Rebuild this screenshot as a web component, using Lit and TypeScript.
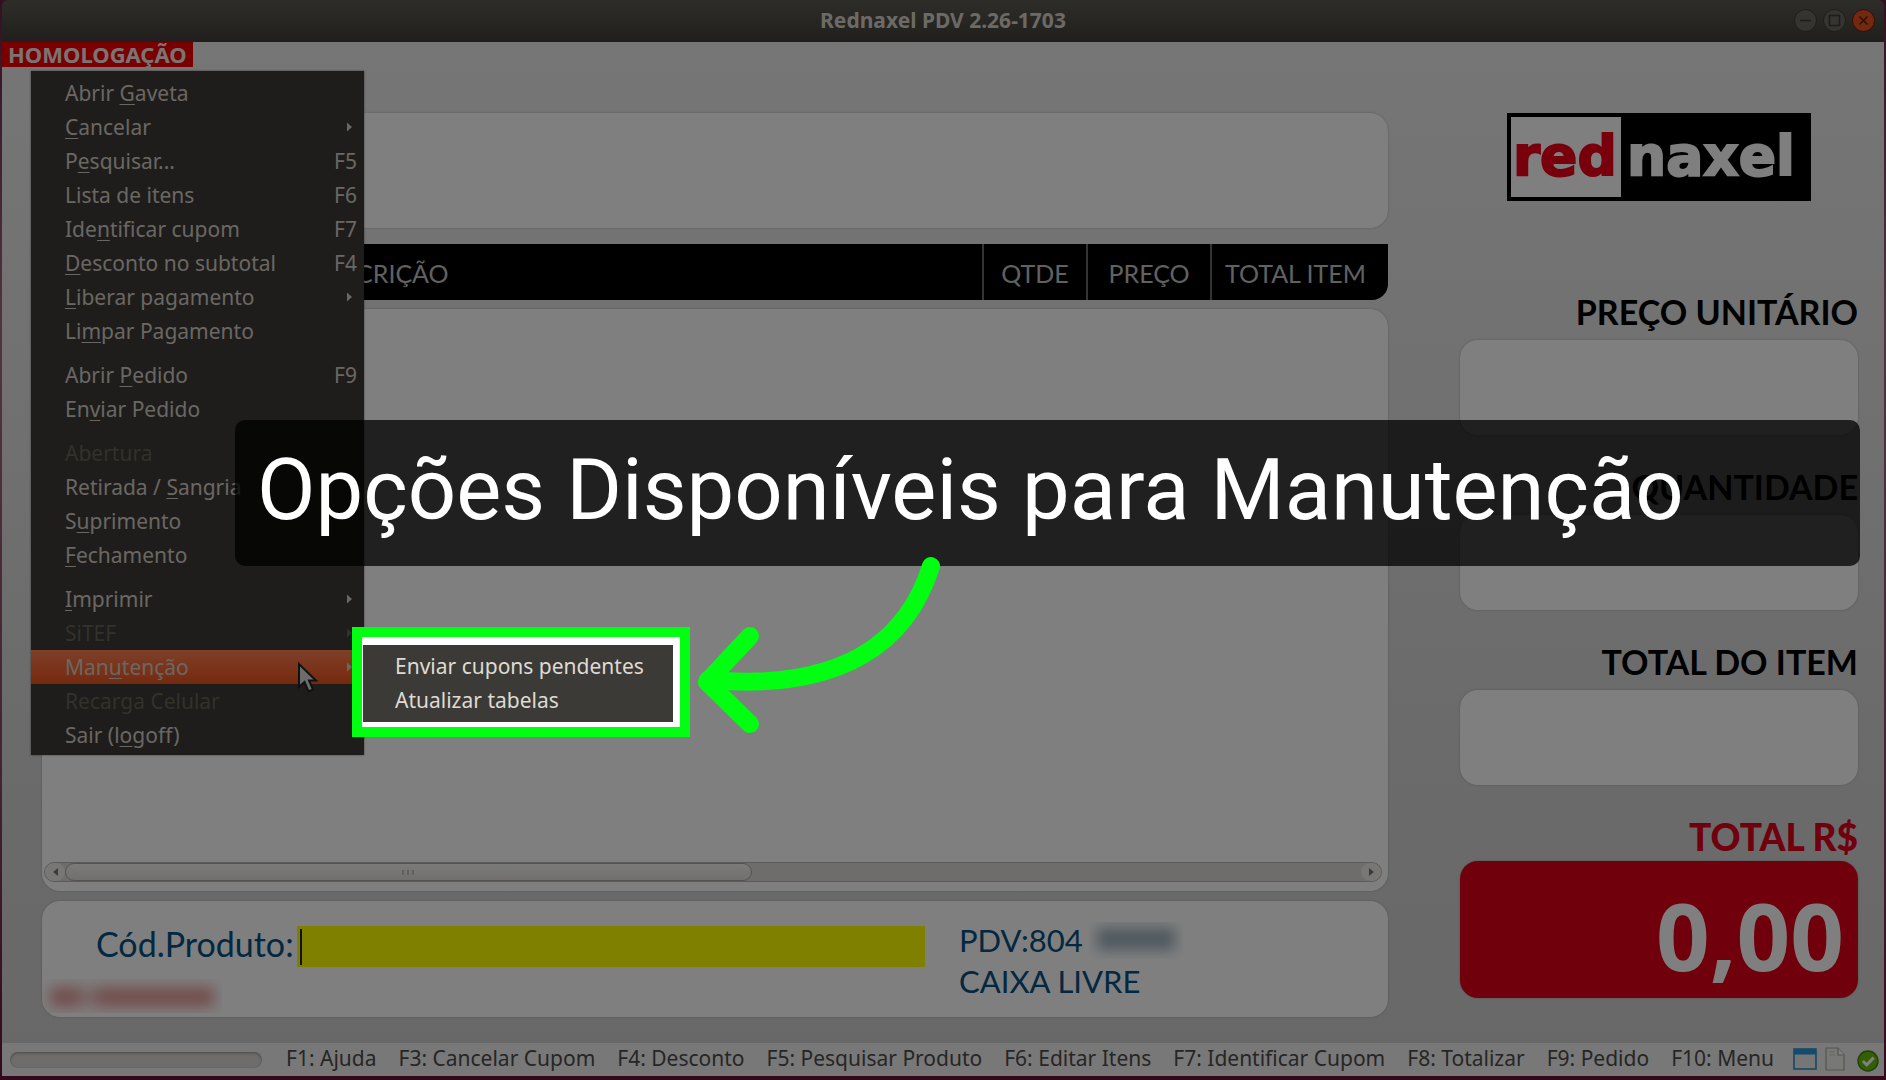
import { LitElement, html, css, svg, nothing } from "lit";
import { customElement } from "lit/decorators.js";
import { classMap } from "lit/directives/class-map.js";

interface MenuEntry {
  text: string;
  key?: string;
  shortcut?: string;
  sub?: boolean;
  disabled?: boolean;
  active?: boolean;
}

const MENU: MenuEntry[][] = [
  [
    { text: "Abrir Gaveta", key: "G" },
    { text: "Cancelar", key: "C", sub: true },
    { text: "Pesquisar...", key: "e", shortcut: "F5" },
    { text: "Lista de itens", shortcut: "F6" },
    { text: "Identificar cupom", key: "n", shortcut: "F7" },
    { text: "Desconto no subtotal", key: "D", shortcut: "F4" },
    { text: "Liberar pagamento", key: "L", sub: true },
    { text: "Limpar Pagamento", key: "m" },
  ],
  [
    { text: "Abrir Pedido", key: "P", shortcut: "F9" },
    { text: "Enviar Pedido", key: "v" },
  ],
  [
    { text: "Abertura", disabled: true },
    { text: "Retirada / Sangria", key: "S" },
    { text: "Suprimento", key: "u" },
    { text: "Fechamento", key: "F" },
  ],
  [
    { text: "Imprimir", key: "I", sub: true },
    { text: "SiTEF", sub: true, disabled: true },
    { text: "Manutenção", key: "u", sub: true, active: true },
    { text: "Recarga Celular", disabled: true },
    { text: "Sair (logoff)", key: "o" },
  ],
];

const SUBMENU = ["Enviar cupons pendentes", "Atualizar tabelas"];

const FIELDS = [
  { id: "unit", label: "PREÇO UNITÁRIO" },
  { id: "qty", label: "QUANTIDADE" },
  { id: "item", label: "TOTAL DO ITEM" },
];

const HINTS = [
  "F1: Ajuda",
  "F3: Cancelar Cupom",
  "F4: Desconto",
  "F5: Pesquisar Produto",
  "F6: Editar Itens",
  "F7: Identificar Cupom",
  "F8: Totalizar",
  "F9: Pedido",
  "F10: Menu",
];

@customElement("pdv-menu")
class PdvMenu extends LitElement {
  static styles = css`
    :host {
      display: block;
      box-sizing: border-box;
      width: 333px;
      padding: 5px 0 3px;
      background: #3c3a37;
      box-shadow: 0 0 2px rgba(0, 0, 0, 0.5);
      font-family: "Noto Sans", "Open Sans", sans-serif;
      font-size: 21px;
    }
    .item {
      display: flex;
      align-items: center;
      width: 100%;
      height: 34px;
      padding: 0 7px 0 34px;
      border: 0;
      background: none;
      color: #d4cfc6;
      font: inherit;
      text-align: left;
    }
    .label {
      flex: 1;
      white-space: pre;
    }
    .label u {
      text-decoration-thickness: 1px;
      text-underline-offset: 3px;
    }
    .disabled {
      color: #656255;
    }
    .active {
      background: linear-gradient(#fa8050, #f2602c 70%, #e4561f);
    }
    .arrow {
      width: 5px;
      height: 10px;
      margin-right: 5px;
      fill: currentColor;
    }
    .sep {
      height: 10px;
    }
  `;

  private label(e: MenuEntry) {
    if (!e.key) return e.text;
    const i = e.text.indexOf(e.key);
    return html`${e.text.slice(0, i)}<u>${e.key}</u>${e.text.slice(i + 1)}`;
  }

  render() {
    return html`${MENU.map(
      (group, g) => html`${g ? html`<div class="sep" role="separator"></div>` : nothing}
        ${group.map(
          (e) => html`<button
            class=${classMap({ item: true, disabled: !!e.disabled, active: !!e.active })}
            role="menuitem"
            ?disabled=${e.disabled}
          ><span class="label">${this.label(e)}</span>${e.shortcut
              ? html`<span>${e.shortcut}</span>`
              : nothing}${e.sub
              ? html`<svg class="arrow" viewBox="0 0 5 10"><path d="M0 0.5L5 5L0 9.5Z" /></svg>`
              : nothing}</button>`
        )}`
    )}`;
  }
}

@customElement("pdv-sidebar")
class PdvSidebar extends LitElement {
  static styles = css`
    :host {
      display: flex;
      flex-direction: column;
      font-family: Lato, "Open Sans", sans-serif;
    }
    .logo {
      display: flex;
      align-self: center;
      box-sizing: border-box;
      width: 304px;
      height: 88px;
      margin: 0 0 85px;
      padding: 4px;
      background: #000;
    }
    .field {
      display: flex;
      flex-direction: column;
      margin-bottom: 26px;
    }
    .caption {
      height: 54px;
      line-height: 52px;
      text-align: right;
      font-size: 34px;
      font-weight: 700;
      color: #000;
      white-space: nowrap;
    }
    .box {
      box-sizing: border-box;
      width: 100%;
      height: 95px;
      padding: 0 14px;
      border: 0;
      border-radius: 18px;
      background: #fff;
      box-shadow: 0 0 2px rgba(90, 110, 110, 0.5);
      font: 600 56px Lato, sans-serif;
      text-align: right;
    }
    .total .caption {
      height: 50px;
      color: #e0001c;
      font-size: 37px;
      font-weight: 900;
    }
    .total {
      margin: 0;
    }
    .total .box {
      display: block;
      height: 137px;
      background: #e00018;
      color: #fff;
      font: 700 94px/148px "Open Sans", sans-serif;
    }
  `;

  render() {
    return html`
      <svg class="logo" viewBox="0 0 296 80" role="img" aria-label="rednaxel">
        <rect width="110" height="80" fill="#fff" />
        <g font-family="DejaVu Sans, sans-serif" font-weight="700" font-size="55" stroke-width="2">
          <text x="2" y="58" fill="#f00018" stroke="#f00018">red</text>
          <text x="116" y="58" fill="#fff" stroke="#fff">naxel</text>
        </g>
      </svg>
      ${FIELDS.map(
        (f) => html`<div class="field">
          <label class="caption" for=${f.id}>${f.label}</label>
          <input class="box" id=${f.id} readonly />
        </div>`
      )}
      <div class="field total">
        <label class="caption" for="total">TOTAL R$</label>
        <output class="box" id="total">0,00</output>
      </div>
    `;
  }
}

@customElement("pdv-status")
class PdvStatus extends LitElement {
  static styles = css`
    :host {
      display: flex;
      align-items: center;
      height: 33px;
      padding: 0 5px 0 8px;
      background: #f2f1f0;
      color: #4c4c4c;
      font-family: "Noto Sans", "Open Sans", sans-serif;
      font-size: 21px;
      line-height: 31px;
    }
    .progress {
      width: 252px;
      height: 16px;
      border-radius: 8px;
      background: #dcdad6;
      box-shadow: inset 0 1px 3px rgba(0, 0, 0, 0.35);
    }
    .hints {
      flex: 1;
      display: flex;
      justify-content: space-between;
      padding-bottom: 2px;
      margin: 0 19px 0 24px;
      white-space: nowrap;
    }
    .icons {
      display: flex;
      align-items: center;
      gap: 8px;
    }
    .icons svg:last-child {
      margin-left: 4px;
    }
  `;

  render() {
    return html`
      <div class="progress"></div>
      <div class="hints">${HINTS.map((h) => html`<span>${h}</span>`)}</div>
      <div class="icons">
        <svg width="24" height="24" viewBox="0 0 24 24">
          <rect x="1" y="1" width="22" height="20" fill="#ececec" stroke="#2f8fc4" stroke-width="1.6" />
          <rect x="1" y="1" width="22" height="5.5" fill="#2596d6" />
        </svg>
        <svg width="20" height="26" viewBox="0 0 20 26">
          <path d="M1 1H13L19 8V23H1Z" fill="#f0f0ee" stroke="#a9a9a6" stroke-width="1.2" />
          <path d="M13 1V8H19" fill="#fff" stroke="#a9a9a6" stroke-width="1.2" />
          <path d="M4 5H10M4 8H10" stroke="#d2d2d0" />
        </svg>
        <svg width="22" height="26" viewBox="0 0 22 26">
          <circle cx="11" cy="14" r="10" fill="#68bd08" stroke="#3f8404" stroke-width="1.4" />
          <path d="M5.8 14L9.8 17.8L16.6 10.6" fill="none" stroke="#fff" stroke-width="3" />
        </svg>
      </div>
    `;
  }
}

@customElement("app-root")
class AppRoot extends LitElement {
  static styles = css`
    :host {
      display: block;
      position: relative;
      overflow: hidden;
      font-family: "Noto Sans", "Open Sans", sans-serif;
    }
    .desktop {
      display: flex;
      box-sizing: border-box;
      min-height: 100vh;
      padding: 0 2px 4px;
      background: linear-gradient(#6a2048, #a06a80 30%, #8a4a68 70%, #6a1238);
    }
    .window {
      flex: 1;
      display: flex;
      flex-direction: column;
      min-width: 0;
    }
    .titlebar {
      display: grid;
      grid-template-columns: 1fr auto 1fr;
      align-items: center;
      box-sizing: border-box;
      height: 42px;
      padding: 0 9px 2px;
      background: linear-gradient(#5c5b52, #403e3a);
      border-radius: 6px 6px 0 0;
      color: #d9d5cb;
    }
    .titlebar h1 {
      grid-column: 2;
      margin: 0;
      font-size: 21px;
      font-weight: 700;
    }
    .controls {
      display: flex;
      justify-content: flex-end;
      gap: 6px;
    }
    .control {
      width: 23px;
      height: 23px;
      padding: 0;
      border: 0;
      background: none;
    }
    .control svg {
      display: block;
    }
    .stage {
      flex: 1;
      display: flex;
      flex-direction: column;
      background: linear-gradient(#ececec, #e2e2e2 35%, #d6d6d6 70%, #d1d1d1);
    }
    .env {
      align-self: flex-start;
      box-sizing: border-box;
      height: 25px;
      padding: 0 6px;
      background: #f50000;
      color: #f4e8e8;
      font-size: 22px;
      font-weight: 700;
      line-height: 25px;
    }
    .main {
      flex: 1;
      display: grid;
      grid-template-columns: minmax(0, 1fr) 398px;
      gap: 72px;
      padding: 46px 26px 26px 40px;
    }
    .left {
      display: flex;
      flex-direction: column;
    }
    .card {
      border-radius: 18px;
      background: #fff;
      box-shadow: 0 0 2px rgba(90, 110, 110, 0.5);
    }
    .display {
      height: 115px;
    }
    .columns {
      width: 100%;
      height: 56px;
      margin: 16px 0 9px;
      border-spacing: 0;
      table-layout: fixed;
      border-radius: 0 0 16px 0;
      background: #000;
      color: #c2c2c2;
      font-family: Lato, "Open Sans", sans-serif;
      font-size: 25px;
    }
    .columns th {
      padding: 2px 0 0;
      font-weight: 400;
      text-align: center;
    }
    .columns th + th {
      border-left: 2px solid #666;
    }
    .columns .desc {
      padding-left: 267px;
      text-align: left;
    }
    .columns .qty {
      width: 102px;
    }
    .columns .price {
      width: 122px;
    }
    .columns .sum {
      box-sizing: border-box;
      width: 178px;
      padding-left: 13px;
      text-align: left;
    }
    .list {
      flex: 1;
      display: flex;
      flex-direction: column;
      justify-content: flex-end;
      padding: 0 6px 9px 2px;
    }
    .scroll {
      display: flex;
      box-sizing: border-box;
      height: 20px;
      border: 1px solid #b8b6b2;
      border-radius: 10px;
      background: #dddbd8;
    }
    .step {
      width: 20px;
      padding: 0;
      border: 0;
      border-radius: 10px;
      background: #f0efed;
    }
    .step svg {
      display: block;
      margin: 0 auto;
      fill: #777;
    }
    .track {
      flex: 1;
      display: flex;
    }
    .thumb {
      display: flex;
      align-items: center;
      justify-content: center;
      gap: 3px;
      box-sizing: border-box;
      width: 53%;
      border: 1px solid #aaa7a0;
      border-radius: 9px;
      background: linear-gradient(#f6f5f4, #e2e0dc);
    }
    .grip {
      width: 2px;
      height: 5px;
      background: #c2c0bc;
    }
    .entry {
      display: grid;
      grid-template-columns: 891px minmax(0, 1fr);
      gap: 26px;
      box-sizing: border-box;
      height: 116px;
      margin-top: 10px;
      overflow: hidden;
      color: #06507f;
      font-family: Lato, "Open Sans", sans-serif;
      font-size: 34px;
    }
    .product {
      display: flex;
      flex-direction: column;
      gap: 12px;
      padding-top: 25px;
    }
    .row {
      display: flex;
      height: 41px;
      padding: 0 8px 0 54px;
    }
    .row label {
      flex: none;
      width: 201px;
      line-height: 36px;
    }
    .code {
      flex: 1;
      box-sizing: border-box;
      min-width: 0;
      height: 41px;
      padding: 0 4px;
      border: 0;
      background: linear-gradient(#222, #222) 3px 3px / 2px 36px no-repeat #ff0;
      font: inherit;
    }
    .station {
      display: flex;
      flex-direction: column;
      padding-top: 19px;
      font-size: 31px;
      line-height: 41px;
    }
    .line {
      display: flex;
      align-items: center;
      gap: 6px;
    }
    .masked {
      overflow: hidden;
      width: 94px;
      height: 37px;
    }
    .masked::before {
      content: "";
      display: block;
      height: 22px;
      margin: 6px 8px;
      background: #9db2be;
      filter: blur(7px);
    }
    .masked.alert {
      width: 180px;
      height: 34px;
    }
    .masked.alert::before {
      height: 20px;
      margin: 8px;
      background: linear-gradient(90deg, #e89c9c 16%, #f4dede 22%, #e89c9c 32%, #e89c9c);
    }
    .menu {
      position: absolute;
      left: 31px;
      top: 71px;
    }
    .pointer {
      position: absolute;
      left: 296px;
      top: 661px;
    }
    .dim {
      position: absolute;
      inset: 0;
      background: rgba(0, 0, 0, 0.5);
      pointer-events: none;
    }
    .focus {
      position: absolute;
      left: 352px;
      top: 627px;
      box-sizing: border-box;
      width: 338px;
      height: 110px;
      padding: 8px 7px 5px 1px;
      border: 10px solid #00ff11;
      background: #fff;
    }
    .submenu {
      display: flex;
      flex-direction: column;
      box-sizing: border-box;
      height: 77px;
      padding: 4px 0;
      background: #3c3a37;
    }
    .submenu button {
      height: 34px;
      padding: 0 0 0 32px;
      border: 0;
      background: none;
      color: #dfdbd2;
      font: 21px "Noto Sans", "Open Sans", sans-serif;
      text-align: left;
      white-space: nowrap;
    }
    .banner {
      position: absolute;
      left: 235px;
      right: 26px;
      top: 420px;
      box-sizing: border-box;
      height: 146px;
      margin: 0;
      padding: 0 22px;
      border-radius: 10px;
      background: rgba(0, 0, 0, 0.75);
      color: #fff;
      font: 400 85px/140px Roboto, Inter, sans-serif;
      white-space: nowrap;
    }
    .callout {
      position: absolute;
      left: 690px;
      top: 550px;
    }
  `;

  render() {
    return html`
      <div class="desktop">
        <div class="window">
          <header class="titlebar">
            <h1>Rednaxel PDV 2.26-1703</h1>
            <div class="controls">
              ${this.control("Minimizar", "#6b6962", "#3a3934", svg`<path d="M6 11.5H17" />`)}
              ${this.control("Maximizar", "#6b6962", "#3a3934", svg`<rect x="6.5" y="6.5" width="10" height="10" />`)}
              ${this.control("Fechar", "#e8501e", "#5a2210", svg`<path d="M7.5 7.5L15.5 15.5M15.5 7.5L7.5 15.5" />`)}
            </div>
          </header>
          <div class="stage">
            <div class="env">HOMOLOGAÇÃO</div>
            <main class="main">
              <section class="left">
                <div class="card display"></div>
                <table class="columns">
                  <thead>
                    <tr>
                      <th class="desc">DESCRIÇÃO</th>
                      <th class="qty">QTDE</th>
                      <th class="price">PREÇO</th>
                      <th class="sum">TOTAL ITEM</th>
                    </tr>
                  </thead>
                </table>
                <div class="card list">
                  <div class="scroll">
                    <button class="step" aria-label="Rolar para a esquerda">
                      <svg width="5" height="8" viewBox="0 0 5 8"><path d="M5 0V8L0 4Z" /></svg>
                    </button>
                    <div class="track">
                      <div class="thumb">
                        <span class="grip"></span><span class="grip"></span><span class="grip"></span>
                      </div>
                    </div>
                    <button class="step" aria-label="Rolar para a direita">
                      <svg width="5" height="8" viewBox="0 0 5 8"><path d="M0 0V8L5 4Z" /></svg>
                    </button>
                  </div>
                </div>
                <div class="card entry">
                  <div class="product">
                    <div class="row">
                      <label for="code">Cód.Produto:</label>
                      <input id="code" class="code" />
                    </div>
                    <div class="masked alert"></div>
                  </div>
                  <div class="station">
                    <div class="line"><span>PDV:804</span><span class="masked"></span></div>
                    <div>CAIXA LIVRE</div>
                  </div>
                </div>
              </section>
              <pdv-sidebar></pdv-sidebar>
            </main>
          </div>
          <pdv-status></pdv-status>
        </div>
      </div>

      <pdv-menu class="menu" role="menu"></pdv-menu>
      <svg class="pointer" width="24" height="34" viewBox="0 0 24 34">
        <path d="M3 3V26L8.5 21L12.5 30.5L17 28.5L13 19.5H20Z" fill="#d8d8d8" stroke="#222" stroke-width="2" />
      </svg>
      <div class="dim"></div>

      <p class="banner">Opções Disponíveis para Manutenção</p>
      <div class="focus">
        <div class="submenu" role="menu">
          ${SUBMENU.map((s) => html`<button role="menuitem">${s}</button>`)}
        </div>
      </div>
      <svg class="callout" width="260" height="190" viewBox="690 550 260 190" fill="none"
        stroke="#00ff11" stroke-width="18" stroke-linecap="round" stroke-linejoin="round">
        <path d="M931 566C908 640 845 692 708 680" />
        <path d="M750 636L707 682L750 724" />
      </svg>
    `;
  }

  private control(name: string, fill: string, ink: string, glyph: unknown) {
    return html`<button class="control" aria-label=${name}>
      <svg width="23" height="23" viewBox="0 0 23 23">
        <circle cx="11.5" cy="11.5" r="11" fill=${fill} stroke=${ink} stroke-width="1" />
        <g fill="none" stroke=${ink} stroke-width="1.6">${glyph}</g>
      </svg>
    </button>`;
  }
}
